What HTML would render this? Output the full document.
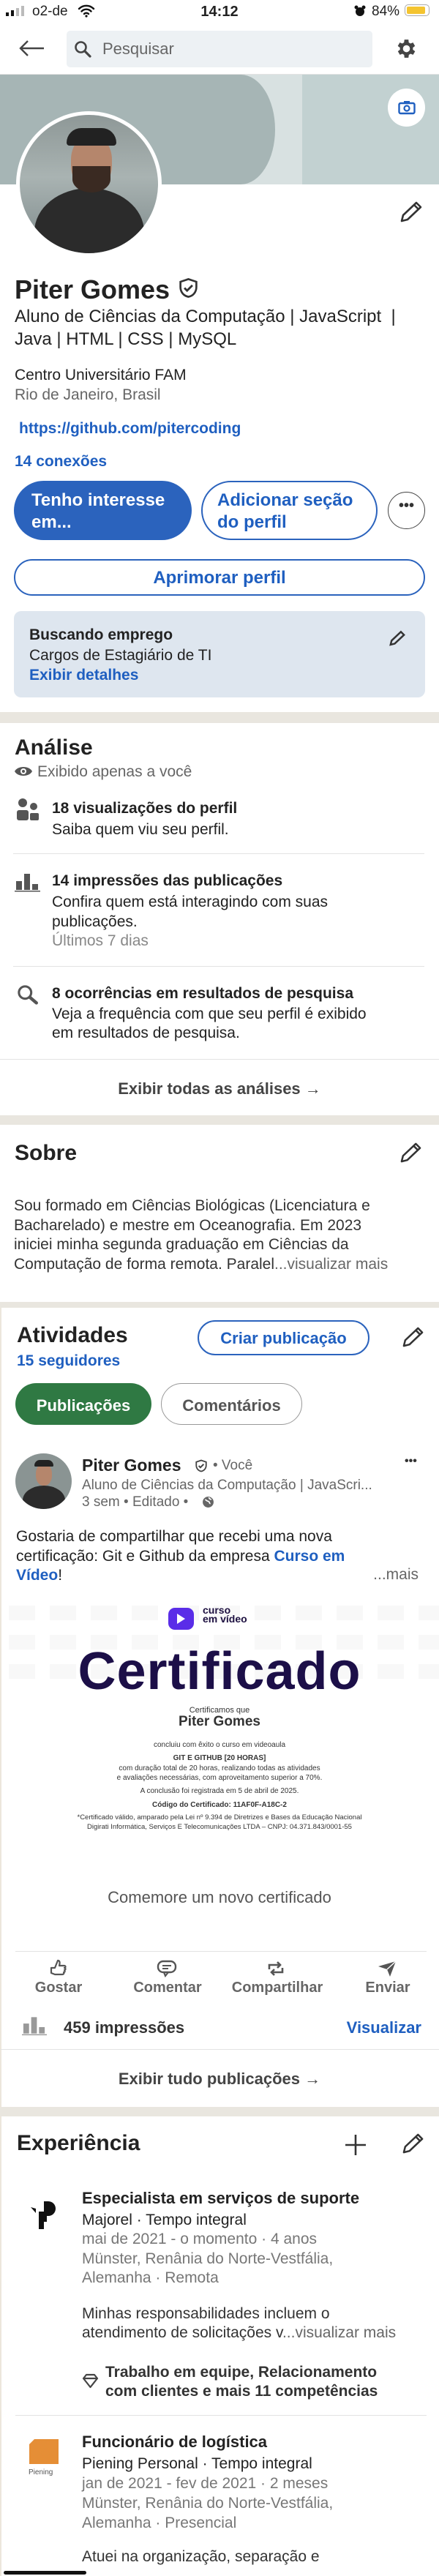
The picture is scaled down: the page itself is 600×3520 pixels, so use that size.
<!DOCTYPE html>
<html><head><meta charset="utf-8">
<style>
*{margin:0;padding:0;box-sizing:border-box}
body{width:600px;height:3520px;position:relative;background:#fff;font-family:"Liberation Sans",sans-serif;color:#222;overflow:hidden}
.t{position:absolute;white-space:nowrap;line-height:1.15}
.b{font-weight:bold}
.g{color:#666}
.bl{color:#1f5fc0}
.a{position:absolute}
.hr{position:absolute;height:1px;background:#e3e3e3}
.gap{position:absolute;left:0;width:600px;background:#e9e6df}
</style></head><body>

<!-- status bar -->
<svg class="a" style="left:8px;top:8px" width="30" height="16"><rect x="0" y="9" width="4" height="5" fill="#111"/><rect x="7" y="6" width="4" height="8" fill="#111"/><rect x="14" y="3" width="4" height="11" fill="#bbb"/><rect x="21" y="0" width="4" height="14" fill="#bbb"/></svg>
<div class="t" style="left:44px;top:5px;font-size:19px">o2-de</div>
<svg class="a" style="left:106px;top:6px" width="24" height="18" viewBox="0 0 24 18"><path d="M2 6a14 14 0 0 1 20 0M5.5 9.5a9 9 0 0 1 13 0M9 13a4 4 0 0 1 6 0" stroke="#111" stroke-width="2.4" fill="none" stroke-linecap="round"/><circle cx="12" cy="16" r="1.6" fill="#111"/></svg>
<div class="t b" style="left:0;width:600px;text-align:center;top:5px;font-size:20px">14:12</div>
<svg class="a" style="left:484px;top:7px" width="16" height="16"><circle cx="8" cy="9" r="6" fill="#111"/><circle cx="3" cy="3" r="2.5" fill="#111"/><circle cx="13" cy="3" r="2.5" fill="#111"/></svg>
<div class="t" style="left:508px;top:5px;font-size:19px">84%</div>
<div class="a" style="left:553px;top:6px;width:34px;height:16px;border:1.5px solid #aaa;border-radius:5px"><div style="margin:1.5px;width:25px;height:10px;background:#f4c430;border-radius:2px"></div></div>

<!-- nav -->
<svg class="a" style="left:26px;top:54px" width="36" height="24" viewBox="0 0 36 24"><path d="M34 12H3M12 2L2 12l10 10" stroke="#444" stroke-width="2.4" fill="none"/></svg>
<div class="a" style="left:91px;top:42px;width:418px;height:50px;background:#edf1f4;border-radius:5px"></div>
<svg class="a" style="left:101px;top:55px" width="24" height="24" viewBox="0 0 24 24"><circle cx="9.5" cy="9.5" r="7" stroke="#444" stroke-width="2.6" fill="none"/><path d="M15 15l7 7" stroke="#444" stroke-width="3.2" stroke-linecap="round"/></svg>
<div class="t g" style="left:140px;top:54px;font-size:22px">Pesquisar</div>
<svg class="a" style="left:539px;top:50px" width="33" height="33" viewBox="0 0 24 24"><path fill="#444" d="M19.4 13a7.5 7.5 0 0 0 0-2l2.1-1.6-2-3.5-2.5 1a7.6 7.6 0 0 0-1.7-1L15 3h-4l-.4 2.9a7.6 7.6 0 0 0-1.7 1l-2.5-1-2 3.5L6.6 11a7.5 7.5 0 0 0 0 2l-2.1 1.6 2 3.5 2.5-1a7.6 7.6 0 0 0 1.7 1L11 21h4l.4-2.9a7.6 7.6 0 0 0 1.7-1l2.5 1 2-3.5zM13 15.5a3.5 3.5 0 1 1 0-7 3.5 3.5 0 0 1 0 7z" transform="translate(-1 0)"/></svg>
<div class="hr" style="left:0;top:101px;width:600px"></div>

<!-- cover -->
<div class="a" style="left:0;top:102px;width:600px;height:150px;background:#c2d1d1"></div>
<div class="a" style="left:0;top:102px;width:413px;height:150px;background:#d8e1e1"></div>
<div class="a" style="left:0;top:102px;width:376px;height:150px;background:#a6b5b5;border-radius:0 50px 50px 0/0 80px 80px 0"></div>
<div class="a" style="left:530px;top:121px;width:51px;height:52px;background:#fff;border-radius:50%"></div>
<svg class="a" style="left:544px;top:137px" width="24" height="20" viewBox="0 0 24 20"><rect x="1.5" y="4" width="21" height="14" rx="2" stroke="#1f5fc0" stroke-width="2.4" fill="none"/><rect x="8" y="1" width="8" height="4" fill="#1f5fc0"/><circle cx="12" cy="11" r="3.5" stroke="#1f5fc0" stroke-width="2.2" fill="none"/></svg>

<!-- avatar -->
<div class="a" style="left:22px;top:152px;width:199px;height:199px;border-radius:50%;background:#fff"></div>
<div class="a" style="left:27px;top:157px;width:189px;height:189px;border-radius:50%;overflow:hidden;background:linear-gradient(#8e9897,#a9b3b2 45%,#7d898a)">
  <div class="a" style="left:20px;top:100px;width:150px;height:120px;border-radius:50% 50% 0 0;background:#2b2b2b"></div>
  <div class="a" style="left:70px;top:28px;width:56px;height:74px;border-radius:45%;background:#b5866c"></div>
  <div class="a" style="left:72px;top:70px;width:52px;height:36px;border-radius:0 0 50% 50%;background:#3a2a22"></div>
  <div class="a" style="left:64px;top:18px;width:68px;height:24px;border-radius:30px 30px 6px 6px;background:#222"></div>
</div>
<svg class="a" style="left:545px;top:274px" width="34" height="32" viewBox="0 0 34 32"><path d="M4 28l2-8L24 3l6 6-18 17z M21 6l6 6" stroke="#333" stroke-width="2.6" fill="none" stroke-linejoin="round"/></svg>

<!-- name -->
<div class="t b" style="left:20px;top:375px;font-size:36px">Piter Gomes</div>
<svg class="a" style="left:243px;top:379px" width="29" height="29" viewBox="0 0 24 24"><path d="M12 2l9 3v6c0 6-4 10-9 11-5-1-9-5-9-11V5z" stroke="#333" stroke-width="2.2" fill="none"/><path d="M7.5 12l3 3 6-6" stroke="#333" stroke-width="2.4" fill="none"/></svg>
<div class="t" style="left:20px;top:417px;font-size:24px;line-height:31px">Aluno de Ciências da Computação | JavaScript&nbsp; |<br>Java | HTML | CSS | MySQL</div>
<div class="t" style="left:20px;top:501px;font-size:21px">Centro Universitário FAM</div>
<div class="t g" style="left:20px;top:528px;font-size:21px">Rio de Janeiro, Brasil</div>
<div class="t b bl" style="left:26px;top:574px;font-size:21px">https://github.com/pitercoding</div>
<div class="t b bl" style="left:20px;top:619px;font-size:21px">14 conexões</div>

<div class="a" style="left:19px;top:657px;width:243px;height:81px;background:#2b63bd;border-radius:41px"></div>
<div class="t b" style="left:43px;top:669px;font-size:24px;line-height:30px;color:#fff">Tenho interesse<br>em...</div>
<div class="a" style="left:275px;top:657px;width:241px;height:81px;border:2px solid #2b63bd;border-radius:41px"></div>
<div class="t b bl" style="left:297px;top:669px;font-size:24px;line-height:30px">Adicionar seção<br>do perfil</div>
<div class="a" style="left:530px;top:672px;width:51px;height:51px;border:1.5px solid #444;border-radius:50%"></div>
<div class="t b" style="left:530px;width:51px;text-align:center;top:680px;font-size:20px;color:#333">•••</div>

<div class="a" style="left:19px;top:764px;width:562px;height:50px;border:2px solid #2b63bd;border-radius:25px"></div>
<div class="t b bl" style="left:0;width:600px;text-align:center;top:776px;font-size:24px">Aprimorar perfil</div>

<div class="a" style="left:19px;top:835px;width:562px;height:118px;background:#dee6ef;border-radius:10px"></div>
<div class="t" style="left:40px;top:854px;font-size:21px;line-height:27.5px"><span class="b" style="font-weight:600">Buscando emprego</span><br>Cargos de Estagiário de TI<br><span class="b bl">Exibir detalhes</span></div>
<svg class="a" style="left:531px;top:861px" width="24" height="23" viewBox="0 0 34 32"><path d="M4 28l2-8L24 3l6 6-18 17z" stroke="#333" stroke-width="3.5" fill="none"/></svg>

<div class="gap" style="top:973px;height:15px"></div>

<!-- Análise -->
<div class="t b" style="left:20px;top:1005px;font-size:30px">Análise</div>
<svg class="a" style="left:19px;top:1046px" width="26" height="16" viewBox="0 0 26 16"><path d="M1 8c4-8 20-8 24 0-4 8-20 8-24 0z" fill="#555"/><circle cx="13" cy="8" r="4" fill="#fff"/><circle cx="13" cy="8" r="2" fill="#555"/></svg>
<div class="t g" style="left:51px;top:1043px;font-size:21px">Exibido apenas a você</div>

<svg class="a" style="left:22px;top:1091px" width="31" height="31" viewBox="0 0 31 31"><circle cx="9" cy="6" r="6" fill="#555"/><rect x="1" y="16" width="16" height="14" rx="3" fill="#555"/><circle cx="24" cy="11" r="5" fill="#555"/><rect x="19" y="20" width="12" height="10" rx="2" fill="#555"/></svg>
<div class="t b" style="left:71px;top:1093px;font-size:21px">18 visualizações do perfil</div>
<div class="t" style="left:71px;top:1122px;font-size:21px">Saiba quem viu seu perfil.</div>
<div class="hr" style="left:18px;top:1166px;width:562px"></div>

<svg class="a" style="left:20px;top:1192px" width="35" height="27" viewBox="0 0 35 27"><rect x="2" y="12" width="8" height="12" fill="#555"/><rect x="13" y="2" width="8" height="22" fill="#555"/><rect x="24" y="16" width="8" height="8" fill="#555"/><rect x="0" y="25" width="35" height="1.5" fill="#555"/></svg>
<div class="t b" style="left:71px;top:1192px;font-size:21px">14 impressões das publicações</div>
<div class="t" style="left:71px;top:1220px;font-size:21px;line-height:26.5px">Confira quem está interagindo com suas<br>publicações.</div>
<div class="t" style="left:71px;top:1274px;font-size:21px;color:#888">Últimos 7 dias</div>
<div class="hr" style="left:18px;top:1320px;width:562px"></div>

<svg class="a" style="left:22px;top:1344px" width="31" height="31" viewBox="0 0 24 24"><circle cx="9.5" cy="9.5" r="6.5" stroke="#555" stroke-width="2.4" fill="none"/><path d="M14.5 14.5l7 6" stroke="#555" stroke-width="3.4" stroke-linecap="round"/></svg>
<div class="t b" style="left:71px;top:1346px;font-size:21px">8 ocorrências em resultados de pesquisa</div>
<div class="t" style="left:71px;top:1373px;font-size:21px;line-height:26px">Veja a frequência com que seu perfil é exibido<br>em resultados de pesquisa.</div>
<div class="hr" style="left:0;top:1447px;width:600px"></div>
<div class="t b" style="left:0;width:600px;text-align:center;top:1475px;font-size:22px;color:#444">Exibir todas as análises →</div>

<div class="gap" style="top:1524px;height:13px"></div>

<!-- Sobre -->
<div class="t b" style="left:20px;top:1559px;font-size:30px">Sobre</div>
<svg class="a" style="left:545px;top:1560px" width="33" height="31" viewBox="0 0 34 32"><path d="M4 28l2-8L24 3l6 6-18 17z M21 6l6 6" stroke="#333" stroke-width="2.6" fill="none" stroke-linejoin="round"/></svg>
<div class="t" style="left:19px;top:1635px;font-size:21px;line-height:26.5px;color:#333">Sou formado em Ciências Biológicas (Licenciatura e<br>Bacharelado) e mestre em Oceanografia. Em 2023<br>iniciei minha segunda graduação em Ciências da<br>Computação de forma remota. Paralel<span class="g">...visualizar mais</span></div>

<div class="gap" style="top:1779px;height:8px"></div>
<div class="a" style="left:0;top:1787px;width:2px;height:1733px;background:#ece6dc"></div>

<!-- Atividades -->
<div class="t b" style="left:23px;top:1808px;font-size:30px">Atividades</div>
<div class="t b bl" style="left:23px;top:1848px;font-size:21px">15 seguidores</div>
<div class="a" style="left:270px;top:1804px;width:235px;height:48px;border:2px solid #2b63bd;border-radius:24px"></div>
<div class="t b bl" style="left:270px;width:235px;text-align:center;top:1816px;font-size:22px">Criar publicação</div>
<svg class="a" style="left:548px;top:1812px" width="33" height="31" viewBox="0 0 34 32"><path d="M4 28l2-8L24 3l6 6-18 17z M21 6l6 6" stroke="#333" stroke-width="2.6" fill="none" stroke-linejoin="round"/></svg>

<div class="a" style="left:21px;top:1890px;width:186px;height:57px;background:#2f7943;border-radius:29px"></div>
<div class="t b" style="left:21px;width:186px;text-align:center;top:1908px;font-size:22px;color:#fff">Publicações</div>
<div class="a" style="left:220px;top:1890px;width:193px;height:57px;border:1.5px solid #999;border-radius:29px"></div>
<div class="t b" style="left:220px;width:193px;text-align:center;top:1908px;font-size:22px;color:#555">Comentários</div>

<!-- post -->
<div class="a" style="left:21px;top:1986px;width:77px;height:76px;border-radius:50%;overflow:hidden;background:#8a9493">
  <div class="a" style="left:10px;top:44px;width:58px;height:40px;border-radius:50% 50% 0 0;background:#2b2b2b"></div>
  <div class="a" style="left:28px;top:14px;width:22px;height:30px;border-radius:45%;background:#b5866c"></div>
  <div class="a" style="left:26px;top:9px;width:26px;height:9px;border-radius:10px 10px 2px 2px;background:#222"></div>
</div>
<div class="t b" style="left:112px;top:1989px;font-size:23px">Piter Gomes</div>
<svg class="a" style="left:266px;top:1994px" width="18" height="18" viewBox="0 0 24 24"><path d="M12 2l9 3v6c0 6-4 10-9 11-5-1-9-5-9-11V5z" stroke="#444" stroke-width="2.4" fill="none"/><path d="M7.5 12l3 3 6-6" stroke="#444" stroke-width="2.6" fill="none"/></svg>
<div class="t g" style="left:291px;top:1992px;font-size:19px">• Você</div>
<div class="t g" style="left:112px;top:2019px;font-size:19px">Aluno de Ciências da Computação | JavaScri...</div>
<div class="t g" style="left:112px;top:2042px;font-size:19px">3 sem • Editado •</div>
<svg class="a" style="left:276px;top:2044px" width="17" height="17" viewBox="0 0 16 16"><circle cx="8" cy="8" r="7" fill="#666"/><path d="M4 5c2 0 2 2 4 2s1 3 3 3M9 2c0 2 2 2 3 3" stroke="#fff" stroke-width="1.6" fill="none"/></svg>
<div class="t b" style="left:553px;top:1988px;font-size:16px;color:#333">•••</div>
<div class="t" style="left:22px;top:2087px;font-size:21px;line-height:26.5px">Gostaria de compartilhar que recebi uma nova<br>certificação: Git e Github da empresa <span class="b bl">Curso em</span><br><span class="b bl">Vídeo</span>!</div>
<div class="t g" style="right:28px;top:2140px;font-size:21px">...mais</div>

<!-- certificate -->
<div class="a" style="left:2px;top:2184px;width:598px;height:120px;background:repeating-linear-gradient(90deg,#fff 0 10px,#f8f8f8 10px 46px,#fff 46px 56px)"></div>
<div class="a" style="left:2px;top:2184px;width:598px;height:120px;background:repeating-linear-gradient(#fff 0 10px,rgba(255,255,255,0) 10px 30px,#fff 30px 40px)"></div>
<div class="a" style="left:230px;top:2197px;width:35px;height:30px;background:#5a2de8;border-radius:9px"></div>
<svg class="a" style="left:240px;top:2204px" width="14" height="16"><path d="M2 1l11 7-11 7z" fill="#fff"/></svg>
<div class="t b" style="left:277px;top:2194px;font-size:14px;line-height:12px;color:#1d1040">curso<br>em vídeo</div>
<div class="t b" style="left:0;width:600px;text-align:center;top:2243px;font-size:72px;color:#1c0f48;letter-spacing:1px">Certificado</div>
<div style="position:absolute;left:0;width:600px;text-align:center;font-family:'Liberation Sans',sans-serif;color:#333">
<div class="t" style="left:0;width:600px;top:2331px;font-size:11px">Certificamos que</div>
<div class="t b" style="left:0;width:600px;top:2342px;font-size:19px">Piter Gomes</div>
<div class="t" style="left:0;width:600px;top:2379px;font-size:10px">concluiu com êxito o curso em videoaula</div>
<div class="t b" style="left:0;width:600px;top:2397px;font-size:10px">GIT E GITHUB [20 HORAS]</div>
<div class="t" style="left:0;width:600px;top:2411px;font-size:10px">com duração total de 20 horas, realizando todas as atividades</div>
<div class="t" style="left:0;width:600px;top:2424px;font-size:10px">e avaliações necessárias, com aproveitamento superior a 70%.</div>
<div class="t" style="left:0;width:600px;top:2442px;font-size:10px">A conclusão foi registrada em 5 de abril de 2025.</div>
<div class="t b" style="left:0;width:600px;top:2461px;font-size:10px">Código do Certificado: 11AF0F-A18C-2</div>
<div class="t" style="left:0;width:600px;top:2479px;font-size:9.5px">*Certificado válido, amparado pela Lei nº 9.394 de Diretrizes e Bases da Educação Nacional</div>
<div class="t" style="left:0;width:600px;top:2492px;font-size:9.5px">Digirati Informática, Serviços E Telecomunicações LTDA – CNPJ: 04.371.843/0001-55</div>
</div>
<div class="t" style="left:0;width:600px;text-align:center;top:2580px;font-size:22px;color:#555">Comemore um novo certificado</div>
<div class="hr" style="left:21px;top:2666px;width:562px"></div>

<svg class="a" style="left:66px;top:2677px" width="26" height="25" viewBox="0 0 26 25"><path d="M4 12h5l4-10c3 0 3 3 2 7h7c2 0 2 3 0 3 2 0 2 3 0 3 1 1 1 3-1 3 1 1 0 3-2 3H9l-5-2z" stroke="#555" stroke-width="2.2" fill="none" stroke-linejoin="round"/></svg>
<svg class="a" style="left:214px;top:2678px" width="28" height="24" viewBox="0 0 28 24"><rect x="2" y="2" width="24" height="15" rx="7" stroke="#555" stroke-width="2.4" fill="none"/><path d="M10 17l2 5 4-5" stroke="#555" stroke-width="2.2" fill="none"/><path d="M8 8h12M8 12h8" stroke="#555" stroke-width="2"/></svg>
<svg class="a" style="left:364px;top:2677px" width="26" height="26" viewBox="0 0 26 26"><path d="M4 14V8h15M15 4l4 4-4 4M22 12v6H7M11 22l-4-4 4-4" stroke="#555" stroke-width="2.6" fill="none"/></svg>
<svg class="a" style="left:515px;top:2678px" width="28" height="24" viewBox="0 0 28 24"><path d="M2 9L26 2 18 23 14 13z" fill="#555"/><path d="M14 13l12-11" stroke="#fff" stroke-width="1.5"/></svg>
<div class="t g b" style="left:30px;width:100px;text-align:center;top:2705px;font-size:20px;font-weight:600">Gostar</div>
<div class="t g b" style="left:169px;width:120px;text-align:center;top:2705px;font-size:20px;font-weight:600">Comentar</div>
<div class="t g b" style="left:309px;width:140px;text-align:center;top:2705px;font-size:20px;font-weight:600">Compartilhar</div>
<div class="t g b" style="left:480px;width:100px;text-align:center;top:2705px;font-size:20px;font-weight:600">Enviar</div>

<svg class="a" style="left:30px;top:2755px" width="34" height="27" viewBox="0 0 35 27"><rect x="2" y="10" width="8" height="14" fill="#999"/><rect x="13" y="1" width="8" height="23" fill="#999"/><rect x="24" y="15" width="8" height="9" fill="#999"/><rect x="0" y="25" width="35" height="1.5" fill="#999"/></svg>
<div class="t b" style="left:87px;top:2758px;font-size:22px;color:#333">459 impressões</div>
<div class="t b bl" style="right:24px;top:2758px;font-size:22px">Visualizar</div>
<div class="hr" style="left:0;top:2800px;width:600px"></div>
<div class="t b" style="left:0;width:600px;text-align:center;top:2828px;font-size:22px;color:#444">Exibir tudo publicações →</div>

<div class="gap" style="top:2879px;height:13px"></div>

<!-- Experiência -->
<div class="t b" style="left:23px;top:2912px;font-size:30px">Experiência</div>
<svg class="a" style="left:471px;top:2916px" width="30" height="30"><path d="M15 1v28M1 15h28" stroke="#333" stroke-width="2.6"/></svg>
<svg class="a" style="left:548px;top:2914px" width="33" height="31" viewBox="0 0 34 32"><path d="M4 28l2-8L24 3l6 6-18 17z M21 6l6 6" stroke="#333" stroke-width="2.6" fill="none" stroke-linejoin="round"/></svg>

<svg class="a" style="left:40px;top:3004px" width="40" height="44" viewBox="0 0 40 44"><path d="M20 4h6a10 10 0 0 1 0 20h-2v8h-4v10h-7V18h7z" fill="#111"/><path d="M2 12l7 2v6z" fill="#111"/></svg>
<div class="t b" style="left:112px;top:2991px;font-size:22px">Especialista em serviços de suporte</div>
<div class="t" style="left:112px;top:3022px;font-size:21px">Majorel · Tempo integral</div>
<div class="t" style="left:112px;top:3047px;font-size:21px;line-height:26.5px;color:#777">mai de 2021 - o momento · 4 anos<br>Münster, Renânia do Norte-Vestfália,<br>Alemanha · Remota</div>
<div class="t" style="left:112px;top:3149px;font-size:21px;line-height:26px;color:#333">Minhas responsabilidades incluem o<br>atendimento de solicitações v<span class="g">...visualizar mais</span></div>
<svg class="a" style="left:112px;top:3243px" width="23" height="21" viewBox="0 0 23 21"><path d="M2 7l4-5h11l4 5-9.5 12z M2 7h19" stroke="#444" stroke-width="2.2" fill="none" stroke-linejoin="round"/></svg>
<div class="t b" style="left:144px;top:3229px;font-size:21px;line-height:26px;color:#333">Trabalho em equipe, Relacionamento<br>com clientes e mais 11 competências</div>
<div class="hr" style="left:21px;top:3300px;width:562px"></div>

<div class="a" style="left:40px;top:3333px;width:40px;height:34px;background:#e58e36"></div>
<div class="a" style="left:40px;top:3333px;width:0;height:0;border-left:7px solid #fff;border-bottom:7px solid transparent"></div>
<div class="t" style="left:39px;top:3373px;font-size:10px;color:#555">Piening</div>
<div class="t b" style="left:112px;top:3324px;font-size:22px">Funcionário de logística</div>
<div class="t" style="left:112px;top:3355px;font-size:21px">Piening Personal · Tempo integral</div>
<div class="t" style="left:112px;top:3380px;font-size:21px;line-height:27px;color:#777">jan de 2021 - fev de 2021 · 2 meses<br>Münster, Renânia do Norte-Vestfália,<br>Alemanha · Presencial</div>
<div class="t" style="left:112px;top:3482px;font-size:21px;color:#333">Atuei na organização, separação e</div>
<div class="a" style="left:5px;top:3513px;width:113px;height:5px;background:#111;border-radius:3px"></div>
</body></html>
